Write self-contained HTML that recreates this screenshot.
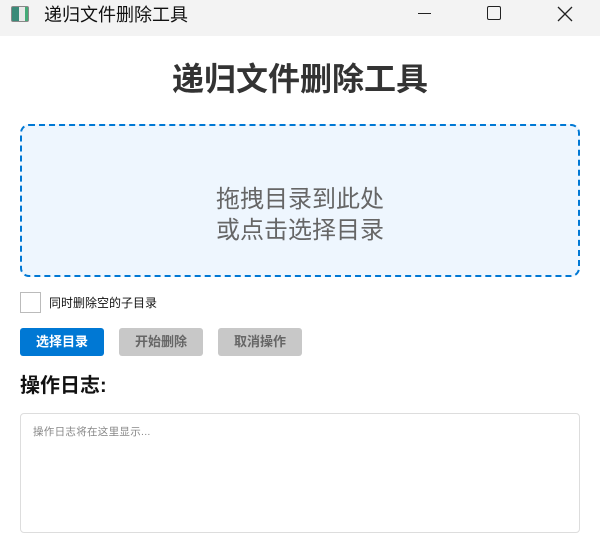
<!DOCTYPE html>
<html><head><meta charset="utf-8"><style>
*{margin:0;padding:0;box-sizing:border-box}
body{width:600px;height:552px;background:#fff;font-family:"Liberation Sans","Noto Sans CJK SC",sans-serif;position:relative;overflow:hidden}
.tb{position:absolute;left:0;top:0;width:600px;height:36px;background:#f3f3f3}
.abs{position:absolute}
</style></head><body>
<div class="tb">
 <div class="abs" style="left:11px;top:6px;width:18px;height:16px;border:1px solid #888;border-radius:2px;background:linear-gradient(90deg,#3a8a78 0 45%,#e8e8e8 45% 80%,#4a7 80%)"></div>
 <div class="abs" style="left:44px;top:3px;font-size:18px;color:#111;line-height:24px">递归文件删除工具</div>
 <div class="abs" style="left:418px;top:13px;width:13px;height:1px;background:#222"></div>
 <div class="abs" style="left:487px;top:6px;width:14px;height:14px;border:1.5px solid #222;border-radius:2px"></div>
 <svg class="abs" style="left:557px;top:6px" width="16" height="16"><path d="M1 1L15 15M15 1L1 15" stroke="#222" stroke-width="1.3"/></svg>
</div>
<div class="abs" style="left:0;top:59px;width:600px;text-align:center;font-size:32px;font-weight:bold;color:#333;line-height:40px">递归文件删除工具</div>
<div class="abs" style="left:20px;top:124px;width:560px;height:153px;border:2px dashed #0078d4;border-radius:9px;background:#eef6fe;text-align:center;color:#666;font-size:24px;line-height:31px;padding-top:58px">拖拽目录到此处<br>或点击选择目录</div>
<div class="abs" style="left:20px;top:292px;width:21px;height:21px;border:1px solid #bbb;background:#fff"></div>
<div class="abs" style="left:49px;top:295px;font-size:12px;line-height:16px;color:#111">同时删除空的子目录</div>
<div class="abs" style="left:20px;top:328px;width:84px;height:28px;background:#0078d4;border-radius:3px;color:#fff;font-size:13px;font-weight:bold;text-align:center;line-height:28px">选择目录</div>
<div class="abs" style="left:119px;top:328px;width:84px;height:28px;background:#c8c8c8;border-radius:3px;color:#666;font-size:13px;font-weight:bold;text-align:center;line-height:28px">开始删除</div>
<div class="abs" style="left:218px;top:328px;width:84px;height:28px;background:#c8c8c8;border-radius:3px;color:#666;font-size:13px;font-weight:bold;text-align:center;line-height:28px">取消操作</div>
<div class="abs" style="left:20px;top:373px;font-size:20px;font-weight:bold;color:#111;line-height:26px">操作日志:</div>
<div class="abs" style="left:20px;top:413px;width:560px;height:120px;border:1px solid #ddd;border-radius:4px;padding:11px 0 0 12px;font-size:10.5px;color:#888;line-height:14px;letter-spacing:0.3px">操作日志将在这里显示...</div>
</body></html>
